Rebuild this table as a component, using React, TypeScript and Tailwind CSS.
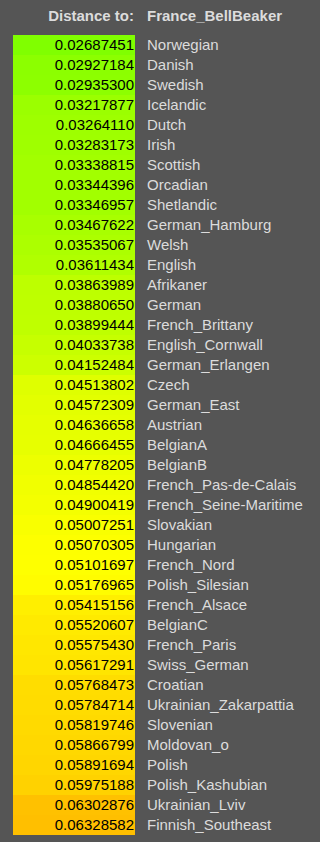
const ROWS: [string, string][] = [
  ["0.02687451", "Norwegian"],
  ["0.02927184", "Danish"],
  ["0.02935300", "Swedish"],
  ["0.03217877", "Icelandic"],
  ["0.03264110", "Dutch"],
  ["0.03283173", "Irish"],
  ["0.03338815", "Scottish"],
  ["0.03344396", "Orcadian"],
  ["0.03346957", "Shetlandic"],
  ["0.03467622", "German_Hamburg"],
  ["0.03535067", "Welsh"],
  ["0.03611434", "English"],
  ["0.03863989", "Afrikaner"],
  ["0.03880650", "German"],
  ["0.03899444", "French_Brittany"],
  ["0.04033738", "English_Cornwall"],
  ["0.04152484", "German_Erlangen"],
  ["0.04513802", "Czech"],
  ["0.04572309", "German_East"],
  ["0.04636658", "Austrian"],
  ["0.04666455", "BelgianA"],
  ["0.04778205", "BelgianB"],
  ["0.04854420", "French_Pas-de-Calais"],
  ["0.04900419", "French_Seine-Maritime"],
  ["0.05007251", "Slovakian"],
  ["0.05070305", "Hungarian"],
  ["0.05101697", "French_Nord"],
  ["0.05176965", "Polish_Silesian"],
  ["0.05415156", "French_Alsace"],
  ["0.05520607", "BelgianC"],
  ["0.05575430", "French_Paris"],
  ["0.05617291", "Swiss_German"],
  ["0.05768473", "Croatian"],
  ["0.05784714", "Ukrainian_Zakarpattia"],
  ["0.05819746", "Slovenian"],
  ["0.05866799", "Moldovan_o"],
  ["0.05891694", "Polish"],
  ["0.05975188", "Polish_Kashubian"],
  ["0.06302876", "Ukrainian_Lviv"],
  ["0.06328582", "Finnish_Southeast"],
]

const MIN = 0.02687451
const MAX = 0.06328582

// green (hue 90) -> yellow -> amber (hue 45)
function cellColor(v: number) {
  const t = (v - MIN) / (MAX - MIN)
  const hue = 90 - 45 * t
  let r = 255
  let g = 255
  if (hue > 60) r = Math.round((255 * (120 - hue)) / 60)
  else g = Math.round((255 * hue) / 60)
  return `rgb(${r},${g},0)`
}

export default function App() {
  return (
    <div
      className="min-h-[842px] w-[320px] bg-[#555555] pl-[13px] pt-[6px] text-[15px] leading-5"
      style={{ fontFamily: '"Liberation Sans", Arial, sans-serif' }}
    >
      <div className="flex h-5 font-bold text-[#dcdcdc]">
        <div className="w-[122px] pr-[1px] text-right">Distance to:</div>
        <div className="pl-[12px] whitespace-nowrap">France_BellBeaker</div>
      </div>

      <div className="mt-[9px] flex flex-col">
        {ROWS.map(([value, name]) => (
          <div key={name} className="flex h-5">
            <div
              className="w-[122px] pr-[1px] text-right text-black"
              style={{ backgroundColor: cellColor(parseFloat(value)) }}
            >
              {value}
            </div>
            <div className="pl-[12px] whitespace-nowrap text-[#dcdcdc]">{name}</div>
          </div>
        ))}
      </div>
    </div>
  )
}
